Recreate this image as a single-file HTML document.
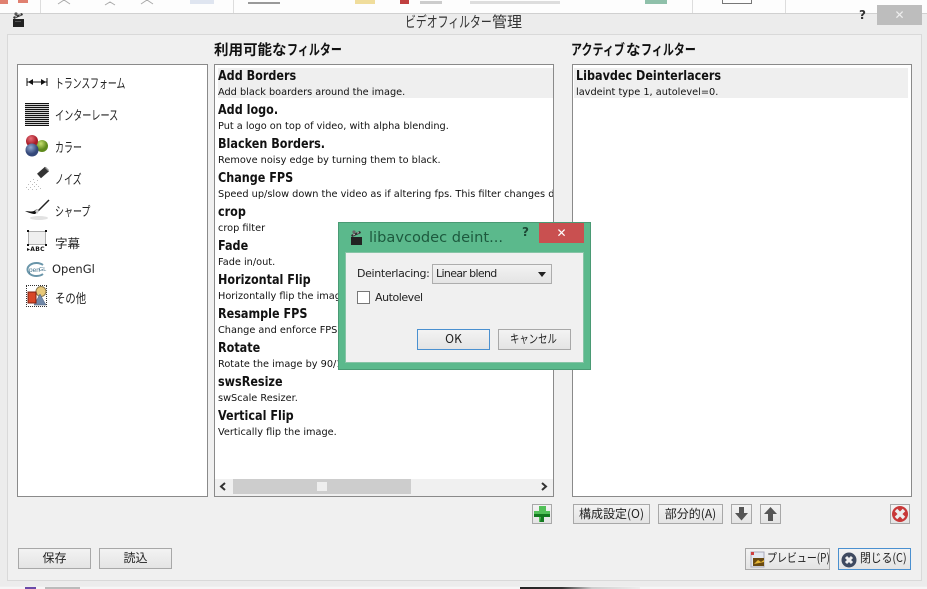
<!DOCTYPE html>
<html lang="ja"><head><meta charset="utf-8"><style>
html,body{margin:0;padding:0;width:927px;height:589px;overflow:hidden}
body{position:relative;background:#efefef;font-family:"DejaVu Sans","Noto Sans CJK JP",sans-serif;color:#111}
.a{position:absolute;box-sizing:border-box}
.t{position:absolute;white-space:nowrap;line-height:1;transform-origin:0 50%}
.jp{font-family:"Noto Sans CJK JP",sans-serif}
.b{position:absolute;box-sizing:border-box;background:linear-gradient(#f3f3f3,#e4e4e4);border:1px solid #a8a8a8;text-align:center;font-family:"Noto Sans CJK JP",sans-serif;font-size:12px;white-space:nowrap;color:#222}
.box{position:absolute;box-sizing:border-box;background:#fff;border:1px solid #8a8a8a}
.n{position:absolute;left:218px;margin-top:1px;font-size:13px;font-weight:bold;line-height:14px;white-space:nowrap;transform:scaleX(.862);transform-origin:0 50%}
.d{position:absolute;left:218px;font-size:9.75px;line-height:12px;white-space:nowrap}
.s{position:absolute;left:55px;font-family:"Noto Sans CJK JP",sans-serif;font-size:13px;line-height:14px;white-space:nowrap;color:#222;transform-origin:0 50%}
.k{transform:scaleX(.69)}
.h{font-size:14.5px;font-weight:bold;top:43px}
</style></head><body>
<div class="a" style="left:0;top:0;width:927px;height:13px;background:#fdfdfd"></div>
<div class="a" style="left:0;top:0;width:8px;height:4px;background:#e08070"></div>
<div class="a" style="left:18px;top:0;width:10px;height:3px;background:#e08070"></div>
<div class="a" style="left:40px;top:0;width:1px;height:13px;background:#ddd"></div>
<div class="a" style="left:233px;top:0;width:1px;height:13px;background:#ddd"></div>
<div class="a" style="left:692px;top:0;width:1px;height:13px;background:#ddd"></div>
<div class="a" style="left:785px;top:0;width:1px;height:13px;background:#ddd"></div>
<svg class="a" style="left:55px;top:0" width="100" height="6" viewBox="0 0 100 6"><path d="M3 4l6-4 6 4M50 5l5-3 5 3M86 4l6-4 6 4" fill="none" stroke="#aaa"/></svg>
<div class="a" style="left:190px;top:0;width:24px;height:4px;background:#dfe5f0"></div>
<div class="a" style="left:248px;top:2px;width:32px;height:2px;background:#999"></div>
<div class="a" style="left:355px;top:0;width:20px;height:4px;background:#f0dd9c"></div>
<div class="a" style="left:400px;top:0;width:9px;height:4px;background:#c04040"></div>
<div class="a" style="left:420px;top:1px;width:22px;height:3px;background:#ccc"></div>
<div class="a" style="left:470px;top:1px;width:90px;height:3px;background:#ddd"></div>
<div class="a" style="left:645px;top:0;width:22px;height:4px;background:#8fc0aa"></div>
<div class="a" style="left:722px;top:0;width:30px;height:4px;border:1px solid #777;border-top:0"></div>
<div class="a" style="left:0;top:13px;width:927px;height:1px;background:#d0d0d0"></div>
<div class="a" style="left:0;top:14px;width:927px;height:572px;background:#ececec"></div>
<div class="a" style="left:7px;top:34px;width:915px;height:547px;background:#f0f0f0;border:1px solid #d9d9d9"></div>
<div class="a" style="left:0;top:587px;width:927px;height:2px;background:#f6f6f6"></div>
<div class="a" style="left:25px;top:587px;width:11px;height:2px;background:#6a4aa8"></div>
<div class="a" style="left:45px;top:587px;width:35px;height:2px;background:#bbb"></div>
<div class="a" style="left:520px;top:587px;width:120px;height:2px;background:linear-gradient(90deg,#222,#333 35%,#ccc 60%,#eee)"></div>

<svg class="a" style="left:12px;top:11px" width="14" height="17" viewBox="0 0 14 17"><rect x="1" y="8" width="11" height="8" fill="#222"/><path d="M1 6L10 2l1 2-9 4z" fill="#333"/><path d="M3 5.500l1.500-.7.500 1-1.500.7zM7 3.700l1.500-.7.500 1-1.500.7z" fill="#ccc"/><circle cx="4" cy="3" r="1.600" fill="#555"/><rect x="3" y="10" width="6" height="1" fill="#555"/></svg>
<div class="t jp" style="left:405px;top:14px;font-size:15px;color:#333;transform:scaleX(.725)">ビデオフィルター</div>
<div class="t jp" style="left:492px;top:14px;font-size:15px;color:#333">管理</div>
<div class="t" style="left:859px;top:9px;font-size:12px;font-weight:bold;color:#333">?</div>
<div class="a" style="left:877px;top:5px;width:45px;height:20px;background:#bdbdbd;color:#eee;font-size:12px;text-align:center;line-height:20px">✕</div>

<div class="t jp h" style="left:214px">利用可能な</div>
<div class="t jp h" style="left:287px;transform:scaleX(.76)">フィルター</div>
<div class="t jp h" style="left:571px;transform:scaleX(.76)">アクティブ</div>
<div class="t jp h" style="left:626px">な</div>
<div class="t jp h" style="left:641px;transform:scaleX(.76)">フィルター</div>

<div class="box" style="left:17px;top:64px;width:191px;height:433px"></div>
<svg class="a" style="left:26px;top:78px" width="22" height="8" viewBox="0 0 22 8"><path d="M1 0v8M21 0v8M1 4h20" stroke="#111" fill="none"/><path d="M2 4l5-3v6zM20 4l-5-3v6z" fill="#111"/></svg>
<div class="s k" style="top:76px;transform:scaleX(.68)">トランスフォーム</div>
<div class="a" style="left:25px;top:103px;width:24px;height:23px;background:repeating-linear-gradient(#111 0 1px,#d0d0d0 1px 2px)"></div>
<div class="s k" style="top:108px;transform:scaleX(.7)">インターレース</div>
<svg class="a" style="left:25px;top:134px" width="24" height="24" viewBox="0 0 24 24"><defs><radialGradient id="r" cx=".4" cy=".3"><stop offset="0" stop-color="#e8707a"/><stop offset="1" stop-color="#a81c28"/></radialGradient><radialGradient id="g" cx=".4" cy=".3"><stop offset="0" stop-color="#c8e070"/><stop offset="1" stop-color="#5f8a1c"/></radialGradient><radialGradient id="bl" cx=".4" cy=".3"><stop offset="0" stop-color="#90a8d0"/><stop offset="1" stop-color="#34487a"/></radialGradient></defs><circle cx="17" cy="12" r="6" fill="url(#g)"/><circle cx="7" cy="7" r="6" fill="url(#r)"/><circle cx="7" cy="16" r="6.500" fill="url(#bl)"/></svg>
<div class="s k" style="top:140px">カラー</div>
<svg class="a" style="left:25px;top:166px" width="25" height="25" viewBox="0 0 25 25"><path d="M14 10L22 3" stroke="#333" stroke-width="6"/><path d="M21 1l3 3-1 1-3-3z" fill="#999"/><g fill="#bbb"><rect x="8" y="13" width="1" height="1"/><rect x="5" y="15" width="1" height="1"/><rect x="9" y="16" width="1" height="1"/><rect x="3" y="18" width="1" height="1"/><rect x="7" y="18" width="1" height="1"/><rect x="11" y="18" width="1" height="1"/><rect x="1" y="21" width="1" height="1"/><rect x="5" y="21" width="1" height="1"/><rect x="9" y="20" width="1" height="1"/><rect x="13" y="20" width="1" height="1"/><rect x="3" y="23" width="1" height="1"/><rect x="7" y="23" width="1" height="1"/><rect x="11" y="23" width="1" height="1"/><rect x="15" y="22" width="1" height="1"/><rect x="12" y="14" width="1" height="1"/></g></svg>
<div class="s k" style="top:172px">ノイズ</div>
<svg class="a" style="left:24px;top:198px" width="26" height="24" viewBox="0 0 26 24"><path d="M25 2L14 13" stroke="#222" stroke-width="1.500"/><path d="M1 13c4 2 8 3 10 3l4-3-2-2-3 2c-3 1-6 0-9 0z" fill="#111"/><path d="M11 13l2-2 2 2-2 3z" fill="#ccc"/><ellipse cx="15" cy="20" rx="9" ry="2" fill="#e2e2e2"/></svg>
<div class="s k" style="top:204px">シャープ</div>
<div class="a" style="left:28px;top:231px;width:18px;height:14px;background:#efefef;border:1px solid #b0b0b0"></div>
<svg class="a" style="left:27px;top:230px" width="20" height="16"><path d="M0 0h2v2H0zM18 0h2v2h-2zM0 14h2v2H0zM18 14h2v2h-2z" fill="#111"/></svg>
<div class="t" style="left:27px;top:247px;font-size:6px;font-weight:bold;letter-spacing:.3px">▸ABC</div>
<div class="s" style="top:236px;font-size:12.5px">字幕</div>
<svg class="a" style="left:24px;top:262px" width="23" height="15" viewBox="0 0 23 15"><path d="M19 12A9 6.500 0 1 1 19 3" fill="none" stroke="#6a96aa" stroke-width="2"/><text x="5" y="10" font-size="6.500" fill="#3f6f88" font-family="Liberation Sans,sans-serif">pen</text><text x="15" y="9" font-size="5.500" fill="#3f6f88" font-family="Liberation Sans,sans-serif">GL</text></svg>
<div class="t" style="left:52px;top:264px;font-size:11.500px;color:#222">OpenGl</div>
<div class="a" style="left:26px;top:285px;width:21px;height:22px;border:1px dotted #333"></div>
<svg class="a" style="left:26px;top:285px" width="22" height="22" viewBox="0 0 22 22"><circle cx="15" cy="6.500" r="5" fill="#e8c878" stroke="#8a7a50"/><path d="M14 9l6 11H8z" fill="#7088a8" stroke="#506078" stroke-width=".5"/><rect x="2" y="7" width="8" height="11" fill="#d84828" stroke="#802010"/></svg>
<div class="s" style="top:291px;transform:scaleX(.8)">その他</div>

<div class="box" style="left:214px;top:64px;width:340px;height:433px;overflow:hidden"></div>
<div class="a" style="left:218px;top:68px;width:335px;height:30px;background:#efefef"></div>
<div class="n" style="top:69px">Add Borders</div><div class="d" style="top:87px">Add black boarders around the image.</div>
<div class="n" style="top:103px">Add logo.</div><div class="d" style="top:121px">Put a logo on top of video, with alpha blending.</div>
<div class="n" style="top:137px">Blacken Borders.</div><div class="d" style="top:155px">Remove noisy edge by turning them to black.</div>
<div class="n" style="top:171px">Change FPS</div><div class="d" style="top:189px;width:335px;overflow:hidden">Speed up/slow down the video as if altering fps. This filter changes duration</div>
<div class="n" style="top:205px">crop</div><div class="d" style="top:223px">crop filter</div>
<div class="n" style="top:239px">Fade</div><div class="d" style="top:257px">Fade in/out.</div>
<div class="n" style="top:273px">Horizontal Flip</div><div class="d" style="top:291px">Horizontally flip the image.</div>
<div class="n" style="top:307px">Resample FPS</div><div class="d" style="top:325px">Change and enforce FPS.</div>
<div class="n" style="top:341px">Rotate</div><div class="d" style="top:359px">Rotate the image by 90/180/270 degrees.</div>
<div class="n" style="top:375px">swsResize</div><div class="d" style="top:393px">swScale Resizer.</div>
<div class="n" style="top:409px">Vertical Flip</div><div class="d" style="top:427px">Vertically flip the image.</div>
<div class="a" style="left:215px;top:479px;width:338px;height:17px;background:#f0f0f0"></div>
<div class="a" style="left:233px;top:479px;width:178px;height:15px;background:#cdcdcd"></div>
<div class="a" style="left:317px;top:482px;width:10px;height:9px;background:#eee"></div>
<svg class="a" style="left:219px;top:482px" width="8" height="9" viewBox="0 0 8 9"><path d="M6 1L2 4.500 6 8" fill="none" stroke="#333" stroke-width="2"/></svg>
<svg class="a" style="left:540px;top:482px" width="8" height="9" viewBox="0 0 8 9"><path d="M2 1L6 4.500 2 8" fill="none" stroke="#333" stroke-width="2"/></svg>

<div class="box" style="left:572px;top:64px;width:340px;height:433px"></div>
<div class="a" style="left:574px;top:68px;width:334px;height:30px;background:#efefef"></div>
<div class="n" style="left:576px;top:69px">Libavdec Deinterlacers</div><div class="d" style="left:576px;top:87px">lavdeint type 1, autolevel=0.</div>

<div class="b" style="left:532px;top:504px;width:20px;height:20px"></div>
<svg class="a" style="left:533px;top:505px" width="18" height="18" viewBox="0 0 18 18"><path d="M6 1h7v5h4v6h-6v5H6v-5H1V6h5z" fill="#52c058"/><path d="M7 17l1-5H1V9h16v3h-6v5z" fill="#147a20"/></svg>
<div class="b" style="left:573px;top:504px;width:77px;height:20px;line-height:17px">構成設定(O)</div>
<div class="b" style="left:658px;top:504px;width:65px;height:20px;line-height:17px">部分的(A)</div>
<div class="b" style="left:731px;top:504px;width:21px;height:20px"></div>
<svg class="a" style="left:733px;top:506px" width="17" height="16" viewBox="0 0 17 16"><path d="M6 1h5v6h4l-6.500 7.500L2 7h4z" fill="#555"/></svg>
<div class="b" style="left:760px;top:504px;width:21px;height:20px"></div>
<svg class="a" style="left:762px;top:506px" width="17" height="16" viewBox="0 0 17 16"><path d="M6 15h5V8h4L8.500 1 2 8h4z" fill="#555"/></svg>
<div class="b" style="left:890px;top:504px;width:20px;height:20px"></div>
<svg class="a" style="left:891px;top:505px" width="18" height="18" viewBox="0 0 18 18"><circle cx="9" cy="9" r="8" fill="#c83838"/><path d="M5 5l8 8M13 5l-8 8" stroke="#eee" stroke-width="3.500"/></svg>

<div class="b" style="left:18px;top:548px;width:73px;height:21px;line-height:18px">保存</div>
<div class="b" style="left:99px;top:548px;width:73px;height:21px;line-height:18px">読込</div>
<div class="b" style="left:745px;top:548px;width:85px;height:22px"></div>
<div class="t jp" style="left:767px;top:552px;font-size:12px;color:#222;transform:scaleX(.83)">プレビュー(P)</div>
<svg class="a" style="left:749px;top:551px" width="17" height="17" viewBox="0 0 17 17"><rect x="2" y="1" width="13" height="15" fill="#e4e8f0" stroke="#aab"/><rect x="4" y="7" width="11" height="8" fill="#6a4a10"/><path d="M5 13l4-4 3 2 3-2v2z" fill="#e8b838"/><rect x="2" y="1" width="3" height="3" fill="#d04040"/></svg>
<div class="b" style="left:838px;top:548px;width:73px;height:22px;border-color:#4a90d0"></div>
<div class="t jp" style="left:860px;top:552px;font-size:12px;color:#222;transform:scaleX(.9)">閉じる(C)</div>
<svg class="a" style="left:841px;top:552px" width="16" height="16" viewBox="0 0 16 16"><circle cx="8" cy="8" r="7.500" fill="#3f4a60"/><path d="M5 5l6 6M11 5l-6 6" stroke="#eee" stroke-width="3"/></svg>

<div class="a" style="left:338px;top:222px;width:253px;height:148px;background:#5bb98c;border:1px solid #4a9a74"></div>
<svg class="a" style="left:350px;top:229px" width="14" height="17" viewBox="0 0 14 17"><rect x="1" y="8" width="11" height="8" fill="#222"/><path d="M1 6L10 2l1 2-9 4z" fill="#333"/><path d="M3 5.500l1.500-.7.500 1-1.500.7zM7 3.700l1.500-.7.500 1-1.500.7z" fill="#ccc"/><circle cx="4" cy="3" r="1.600" fill="#666"/></svg>
<div class="t" style="left:369px;top:231px;font-size:14.600px;color:#1d5a3e">libavcodec deint...</div>
<div class="t" style="left:522px;top:226px;font-size:12px;font-weight:bold;color:#1d4a36">?</div>
<div class="a" style="left:539px;top:223px;width:45px;height:20px;background:#c95050;color:#fff;font-size:12px;font-weight:bold;text-align:center;line-height:20px">✕</div>
<div class="a" style="left:345px;top:252px;width:239px;height:111px;background:#f0f0f0;border:1px solid #86c4a6"></div>
<div class="t" style="left:357px;top:268px;font-size:11px;color:#222;letter-spacing:-.35px">Deinterlacing:</div>
<div class="a" style="left:432px;top:264px;width:120px;height:20px;background:linear-gradient(#f2f2f2,#e4e4e4);border:1px solid #adadad"></div>
<div class="t" style="left:436px;top:268px;font-size:11px;color:#222;letter-spacing:-.65px">Linear blend</div>
<svg class="a" style="left:537px;top:272px" width="10" height="6"><path d="M1 0h8L5 5z" fill="#222"/></svg>
<div class="a" style="left:357px;top:291px;width:13px;height:13px;background:#fff;border:1px solid #777"></div>
<div class="t" style="left:375px;top:292px;font-size:11px;color:#222;letter-spacing:-.45px">Autolevel</div>
<div class="b" style="left:417px;top:329px;width:73px;height:21px;line-height:18px;border-color:#4a90d0">OK</div>
<div class="b" style="left:498px;top:329px;width:73px;height:21px"></div>
<div class="t jp" style="left:510px;top:333px;font-size:12px;color:#222;transform:scaleX(.78)">キャンセル</div>
</body></html>
